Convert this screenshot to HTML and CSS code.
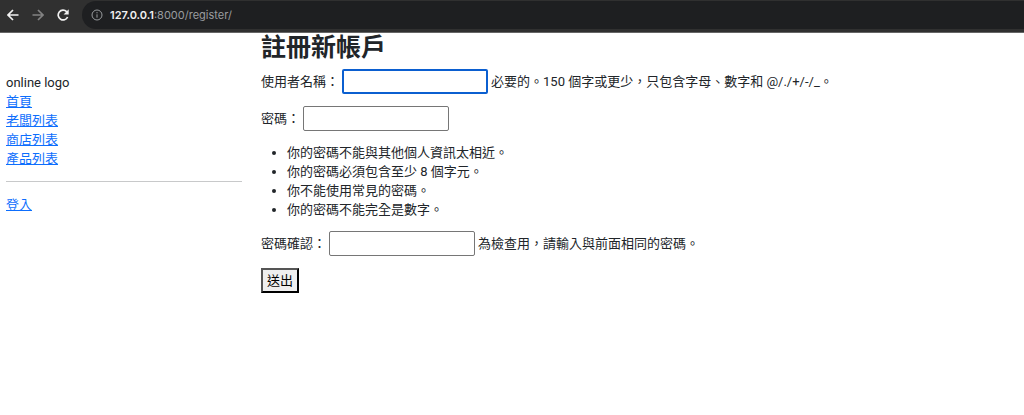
FILE: index.html
```html
<!DOCTYPE html>
<html lang="zh-Hant">
<head>
  <meta charset="UTF-8" />
  <title>註冊新帳戶</title>
  <link rel="stylesheet" href="styles.css">
</head>
<body>
  <header class="browser-bar">
    <button class="nav-btn" type="button" aria-label="Back">
      <svg viewBox="0 0 12 12"><path d="M11.5 6H1.2M6 1L1 6l5 5" /></svg>
    </button>
    <button class="nav-btn disabled" type="button" aria-label="Forward">
      <svg viewBox="0 0 12 12"><path d="M.5 6h10.3M6 1l5 5-5 5" /></svg>
    </button>
    <button class="nav-btn" type="button" aria-label="Reload">
      <svg viewBox="0 0 12 12"><path d="M10.6 8A4.9 4.9 0 1 1 9.6 2.6L10.5 4" /><path class="solid" d="M11.7 .3v5.1H6.6z" /></svg>
    </button>
    <div class="address">
      <svg class="info" viewBox="0 0 12 12"><circle cx="6" cy="6" r="5" /><path d="M6 5.3v3.4M6 3.1v1.2" /></svg>
      <span><b>127.0.0.1</b>:8000/register/</span>
    </div>
  </header>

  <div class="page">
    <nav class="sidebar">
      <div>online logo</div>
      <a href="#">首頁</a>
      <a href="#">老闆列表</a>
      <a href="#">商店列表</a>
      <a href="#">產品列表</a>
      <hr>
      <a href="#">登入</a>
    </nav>

    <main class="content">
      <h1>註冊新帳戶</h1>
      <form>
        <p>
          <label for="username">使用者名稱：</label>
          <input type="text" id="username" class="active">
          <span>必要的。150 個字或更少，只包含字母、數字和 @/./+/-/_。</span>
        </p>
        <p>
          <label for="password1">密碼：</label>
          <input type="password" id="password1">
        </p>
        <ul>
          <li>你的密碼不能與其他個人資訊太相近。</li>
          <li>你的密碼必須包含至少 8 個字元。</li>
          <li>你不能使用常見的密碼。</li>
          <li>你的密碼不能完全是數字。</li>
        </ul>
        <p>
          <label for="password2">密碼確認：</label>
          <input type="password" id="password2">
          <span>為檢查用，請輸入與前面相同的密碼。</span>
        </p>
        <button class="submit" type="submit">送出</button>
      </form>
    </main>
  </div>
</body>
</html>
```

FILE: styles.css
```css
* {
  box-sizing: border-box;
}
body {
  margin: 0;
  font-family: Roboto, "Noto Sans CJK TC", sans-serif;
  font-size: 13px;
  line-height: 19px;
  color: #212529;
  background-color: #fff;
}

/* browser toolbar */
.browser-bar {
  display: flex;
  align-items: center;
  gap: 13px;
  height: 33px;
  padding: 0 0 2px 7px;
  background-color: #303030;
  border-bottom: 1px solid #666;
}
.nav-btn {
  display: flex;
  padding: 0;
  border: 0;
  background: none;
  color: #f1f1f1;
}
.nav-btn.disabled {
  color: #828282;
}
svg {
  width: 12px;
  height: 12px;
  fill: none;
  stroke: currentColor;
  stroke-width: 1.7;
}
.solid {
  fill: currentColor;
  stroke: none;
}
.address {
  display: flex;
  flex: 1;
  align-items: center;
  gap: 7px;
  height: 28px;
  padding-left: 9px;
  border-radius: 14px 0 0 14px;
  background-color: #1e1f21;
  color: #999c9f;
  font-family: Inter, sans-serif;
  font-size: 11px;
}
.address b {
  color: #f1f1f1;
  font-weight: 600;
}
.address .info {
  stroke-width: 1;
}

/* page */
.page {
  display: flex;
}
.sidebar {
  width: 25%;
  padding: 40px 14px 0 6px;
}
.sidebar a {
  display: block;
  color: #0d6efd;
}
hr {
  height: 1px;
  margin: 13px 0;
  border: 0;
  background-color: #c8c9ca;
}
.content {
  flex: 1;
  padding-left: 5px;
}
h1 {
  margin: 0 0 6px;
  font-size: 25px;
  font-weight: 700;
  line-height: 30px;
}
p {
  display: flex;
  align-items: center;
  gap: 3px;
  margin: 0 0 12px;
}
input {
  width: 146px;
  height: 25px;
  padding: 1px 2px;
  border: 1px solid #767676;
  border-radius: 2px;
  background-color: #fff;
  font: inherit;
}
input.active,
input:focus {
  border: 2px solid #0b5fd0;
  outline: none;
}
ul {
  margin: 0 0 12px;
  padding-left: 26px;
}
.submit {
  height: 25px;
  padding: 0 4px;
  border: 2px outset #555;
  background-color: #efefef;
  color: #000;
  font: inherit;
}
```
